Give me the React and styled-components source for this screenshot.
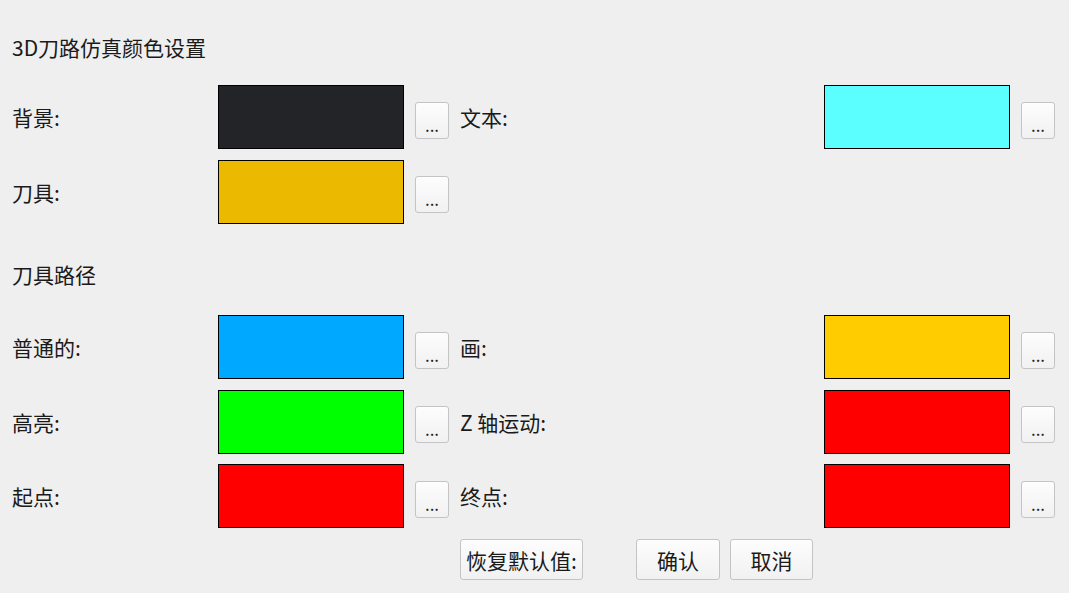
import styled, { createGlobalStyle } from 'styled-components';

const GlobalStyle = createGlobalStyle`
  html, body {
    margin: 0;
    padding: 0;
    background: #efefef;
  }
  body {
    font-family: "Noto Sans CJK SC", "Noto Sans", sans-serif;
    color: #1a1a1a;
  }
`;

const topColors = [
  { label: '背景:', color: '#232428', right: { label: '文本:', color: '#5bffff' } },
  { label: '刀具:', color: '#ebba00' },
];

const pathColors = [
  { label: '普通的:', color: '#00a8ff', right: { label: '画:', color: '#ffcc00' } },
  { label: '高亮:', color: '#00ff00', right: { label: 'Z 轴运动:', color: '#ff0000' } },
  { label: '起点:', color: '#ff0000', right: { label: '终点:', color: '#ff0000' } },
];

const ColorCell = ({ label, color }) => (
  <>
    <Label>{label}</Label>
    <Swatch $color={color} />
    <PickButton>...</PickButton>
  </>
);

const ColorGrid = ({ rows }) => (
  <Grid>
    {rows.map((row) => (
      <Row key={row.label}>
        <ColorCell label={row.label} color={row.color} />
        {row.right && <ColorCell label={row.right.label} color={row.right.color} />}
      </Row>
    ))}
  </Grid>
);

const App = () => {
  return (
    <>
      <GlobalStyle />
      <Page>
        <Heading $top={35} $bottom={26}>3D刀路仿真颜色设置</Heading>
        <ColorGrid rows={topColors} />
        <Heading $top={38.5} $bottom={29}>刀具路径</Heading>
        <ColorGrid rows={pathColors} />
        <Footer>
          <Button $width={123}>恢复默认值:</Button>
          <Spacer />
          <Button $width={84}>确认</Button>
          <Button $width={83}>取消</Button>
        </Footer>
      </Page>
    </>
  );
};

const Page = styled.div`
  width: 1069px;
  height: 593px;
  padding: 0 14px 0 12px;
  box-sizing: border-box;
  overflow: hidden;
`;

const Heading = styled.div`
  font-size: 21px;
  line-height: 24px;
  white-space: nowrap;
  padding-top: ${({ $top }) => $top}px;
  margin-bottom: ${({ $bottom }) => $bottom}px;
`;

const Grid = styled.div`
  display: grid;
  row-gap: 10.5px;
`;

const Row = styled.div`
  display: grid;
  grid-template-columns: 195px 186px 34px 353px 186px 34px;
  column-gap: 11px;
  align-items: center;
  height: 64px;
`;

const Label = styled.div`
  font-size: 21px;
  line-height: 24px;
  white-space: nowrap;
`;

const Swatch = styled.div`
  height: 64px;
  box-sizing: border-box;
  border: 1px solid #000;
  background: ${({ $color }) => $color};
`;

const PickButton = styled.button`
  width: 34px;
  height: 37px;
  margin-top: 6px;
  padding: 8px 0 0;
  box-sizing: border-box;
  border: 1px solid #c4c4c4;
  border-radius: 3px;
  background: linear-gradient(#fdfdfd, #f1f1f1);
  font-family: inherit;
  font-size: 17px;
  line-height: 1;
  color: #222;
  cursor: pointer;
`;

const Footer = styled.div`
  display: flex;
  gap: 10px;
  margin-top: 11px;
  padding-left: 448px;
`;

const Spacer = styled.div`
  width: 33px;
`;

const Button = styled.button`
  width: ${({ $width }) => $width}px;
  height: 41px;
  padding: 0;
  box-sizing: border-box;
  border: 1px solid #c4c4c4;
  border-radius: 3px;
  background: linear-gradient(#fdfdfd, #f1f1f1);
  font-family: inherit;
  font-size: 21px;
  color: #1a1a1a;
  white-space: nowrap;
  cursor: pointer;
`;

export default App;
